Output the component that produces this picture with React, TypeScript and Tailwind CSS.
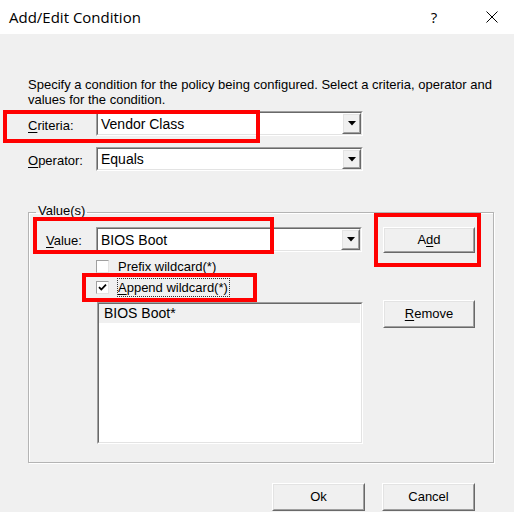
import React from "react";

function Sunken({ className = "", children }: { className?: string; children?: React.ReactNode }) {
  return (
    <div className={"border border-t-[#a0a0a0] border-l-[#a0a0a0] border-b-white border-r-white " + className}>
      <div className="w-full h-full border border-t-[#696969] border-l-[#696969] border-b-[#e3e3e3] border-r-[#e3e3e3] bg-white">
        {children}
      </div>
    </div>
  );
}

function Raised({ className = "", children }: { className?: string; children?: React.ReactNode }) {
  return (
    <div className={"border border-t-white border-l-white border-b-[#696969] border-r-[#696969] " + className}>
      <div className="w-full h-full border border-t-[#e3e3e3] border-l-[#e3e3e3] border-b-[#a0a0a0] border-r-[#a0a0a0] bg-[#f0f0f0] flex items-center justify-center">
        {children}
      </div>
    </div>
  );
}

function Combo({ value, className = "" }: { value: string; className?: string }) {
  return (
    <Sunken className={className}>
      <div className="flex h-full items-stretch">
        <div className="flex-1 flex items-center pl-[3px] text-[14px] leading-none">{value}</div>
        <Raised className="w-[19px]">
          <svg width="8" height="5" viewBox="0 0 8 5">
            <path d="M0 0H8L4 4.5Z" fill="#000" />
          </svg>
        </Raised>
      </div>
    </Sunken>
  );
}

function Check({ checked }: { checked?: boolean }) {
  return (
    <div className="w-[13px] h-[13px] border border-t-[#a0a0a0] border-l-[#a0a0a0] border-b-[#e3e3e3] border-r-[#e3e3e3] bg-white flex items-center justify-center">
      {checked && (
        <svg width="9" height="9" viewBox="0 0 9 9">
          <path d="M1 4.2L3.3 6.5L8 1.6" stroke="#000" strokeWidth="1.8" fill="none" />
        </svg>
      )}
    </div>
  );
}

export default function App() {
  return (
    <div className="relative w-[514px] h-[512px] overflow-hidden bg-[#f0f0f0] text-black text-[13px] font-['Liberation_Sans',Arial,sans-serif]">
      {/* Title bar */}
      <div className="h-[34px] bg-white flex items-center">
        <div className="ml-[9px] flex-1 text-[15px] font-['Segoe_UI','Open_Sans',sans-serif] text-black">
          Add/Edit Condition
        </div>
        <div className="w-[20px] text-center text-[15px] font-['Segoe_UI','Open_Sans',sans-serif] mr-[42px]">?</div>
        <svg width="12" height="12" viewBox="0 0 12 12" className="mr-[16px]">
          <path d="M0.5 0.5L11.5 11.5M11.5 0.5L0.5 11.5" stroke="#000" strokeWidth="1" />
        </svg>
      </div>

      {/* Description */}
      <div className="mt-[43px] ml-[28px] leading-[15px] whitespace-nowrap">
        Specify a condition for the policy being configured. Select a criteria, operator and
        <br />
        values for the condition.
      </div>

      {/* Criteria */}
      <div className="mt-[4px] ml-[28px] flex items-center">
        <div className="w-[68px] pt-[4px]">
          <span className="underline underline-offset-2">C</span>riteria:
        </div>
        <Combo value="Vendor Class" className="w-[267px] h-[25px]" />
      </div>

      {/* Operator */}
      <div className="mt-[11px] ml-[28px] flex items-center">
        <div className="w-[68px] pt-[4px]">
          <span className="underline underline-offset-2">O</span>perator:
        </div>
        <Combo value="Equals" className="w-[267px] h-[24px]" />
      </div>

      {/* Group box */}
      <fieldset className="mt-[34px] ml-[28px] w-[466px] h-[258px] border border-[#b4b4b4] shadow-[1px_1px_0_#fff,inset_1px_1px_0_#fff]">
        <legend className="ml-[7px] px-[2px] leading-[15px]">
          <span className="relative -top-[2px]">Value(s)</span>
        </legend>
        <div className="flex pt-[7px] pl-[17px]">
          <div className="flex flex-col">
            <div className="flex items-center">
              <div className="w-[50px] pt-[3px]">
                <span className="underline underline-offset-2">V</span>alue:
              </div>
              <Combo value="BIOS Boot" className="w-[266px] h-[25px]" />
            </div>
            <div className="mt-[4px] ml-[50px] h-[21px] flex items-center">
              <Check />
              <span className="ml-[9px] leading-[16px] pt-[1px]">
                <span className="underline underline-offset-2">P</span>refix wildcard(*)
              </span>
            </div>
            <div className="ml-[50px] h-[21px] flex items-center">
              <Check checked />
              <span className="ml-[8px] border border-dotted border-[#333] leading-[16px] pt-[1px] pr-[1px]">
                <span className="underline underline-offset-2">A</span>ppend wildcard(*)
              </span>
            </div>
            <Sunken className="mt-[4px] ml-[51px] w-[266px] h-[142px]">
              <div className="h-[19px] bg-[#f0f0f0] flex items-center pl-[5px] text-[14px] mr-[1px]">BIOS Boot*</div>
            </Sunken>
          </div>
          <div className="ml-[20px] flex flex-col">
            <Raised className="w-[92px] h-[26px]">
              <span>
                A<span className="underline underline-offset-2">d</span>d
              </span>
            </Raised>
            <Raised className="mt-[47px] w-[92px] h-[28px]">
              <span>
                <span className="underline underline-offset-2">R</span>emove
              </span>
            </Raised>
          </div>
        </div>
      </fieldset>

      {/* Bottom buttons */}
      <div className="mt-[20px] pr-[39px] flex justify-end gap-[17px]">
        <Raised className="w-[93px] h-[28px]">Ok</Raised>
        <Raised className="w-[93px] h-[28px]">Cancel</Raised>
      </div>

      {/* Red annotation boxes */}
      <div className="absolute left-[3px] top-[110px] w-[257px] h-[33px] border-[4px] border-[#ff0000]" />
      <div className="absolute left-[33px] top-[217px] w-[241px] h-[37px] border-[4px] border-[#ff0000]" />
      <div className="absolute left-[82px] top-[273px] w-[175px] h-[29px] border-[4px] border-[#ff0000]" />
      <div className="absolute left-[374px] top-[213px] w-[107px] h-[54px] border-[4px] border-[#ff0000]" />
    </div>
  );
}
